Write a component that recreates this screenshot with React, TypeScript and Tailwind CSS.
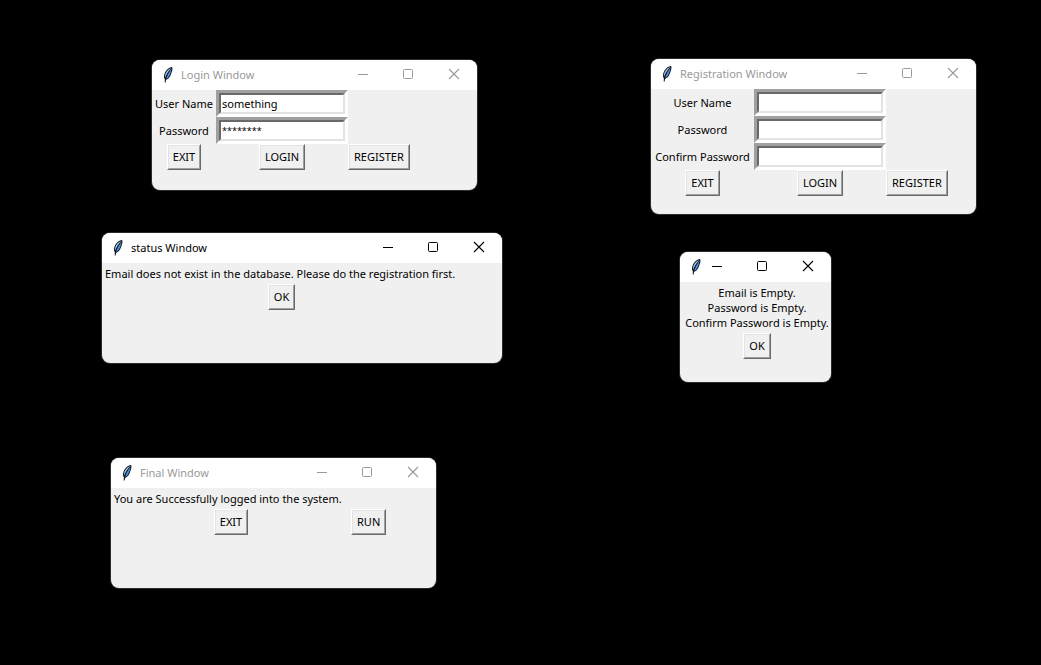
import { useId, type ReactNode } from "react";

function Feather() {
  return (
    <svg viewBox="0 0 16 16" className="size-4 shrink-0" aria-hidden="true">
      <path
        d="M12 0C9.4 0.2 6.6 2.4 5.2 5C4.1 7.2 3.7 9.4 4.2 11.3L4.9 12.2L4.7 15.5L5.6 15.5L6.1 12.9C8.2 12.2 10 10.2 10.8 7.8C11.5 6 11.9 4.6 12.3 3C12.6 1.6 12.5 0.4 12 0Z"
        fill="#11161d"
      />
      <path d="M11.3 0.9C9 1.6 7 3.5 5.9 5.8C5.1 7.6 4.8 9.3 5 10.8C6.4 7.2 8.3 4 11.3 0.9Z" fill="#a9c8ea" />
      <path d="M11.6 1.3C9.2 4.4 7.3 8 6.1 11.9C7.8 11.2 9.2 9.4 9.9 7.4C10.7 5.4 11.3 3.5 11.6 1.3Z" fill="#4b92e2" />
      <path d="M10.4 3C8.4 5.6 6.6 8.6 5.6 12" fill="none" stroke="#1c2c42" strokeWidth="0.4" />
    </svg>
  );
}

const controlClass = "flex h-7 items-center";

function WindowControls() {
  return (
    <div className="ml-auto flex min-w-0">
      <button
        type="button"
        aria-label="Minimize"
        className={`w-[45px] min-w-0 justify-end pr-[17px] ${controlClass}`}
      >
        <svg viewBox="0 0 11 11" className="size-[11px] shrink-0" fill="none" stroke="currentColor">
          <path d="M0 5.5H10" />
        </svg>
      </button>
      <button
        type="button"
        aria-label="Maximize"
        className={`w-[45px] shrink-0 justify-center ${controlClass}`}
      >
        <svg viewBox="0 0 11 11" className="size-[11px]" fill="none" stroke="currentColor">
          <rect x="0.5" y="0.5" width="9" height="9" rx="1" />
        </svg>
      </button>
      <button
        type="button"
        aria-label="Close"
        className={`w-[46px] shrink-0 justify-center ${controlClass}`}
      >
        <svg viewBox="0 0 12 12" className="size-3" fill="none" stroke="currentColor" strokeWidth="1.1">
          <path d="M1 1L11 11M11 1L1 11" />
        </svg>
      </button>
    </div>
  );
}

type WindowProps = {
  title?: string;
  active?: boolean;
  place: string;
  children: ReactNode;
};

function Window({ title, active = false, place, children }: WindowProps) {
  return (
    <section
      className={`absolute overflow-hidden rounded-lg bg-[#f0f0f0] ring-1 ring-[#2b2b2b] ${place}`}
    >
      <header
        className={`flex h-[30px] bg-white pl-2 ${active ? "text-black" : "text-[#999999]"}`}
      >
        <div className="flex shrink-0 items-center gap-[5px]">
          <Feather />
          {title && <h2>{title}</h2>}
        </div>
        <WindowControls />
      </header>
      {children}
    </section>
  );
}

function TkButton({ children }: { children: string }) {
  return (
    <button
      type="button"
      className="justify-self-center border border-t-white border-r-[#696969] border-b-[#696969] border-l-white"
    >
      <span className="block border border-t-[#e3e3e3] border-r-[#a0a0a0] border-b-[#a0a0a0] border-l-[#e3e3e3] px-1 leading-[22px]">
        {children}
      </span>
    </button>
  );
}

type FieldProps = {
  label: string;
  type?: string;
  value?: string;
  masked?: boolean;
};

function Field({ label, type = "text", value = "", masked = false }: FieldProps) {
  const id = useId();
  return (
    <>
      <label htmlFor={id} className="justify-self-center whitespace-nowrap leading-[27px]">
        {label}
      </label>
      <div className="h-[27px] border-3 border-t-[#a0a0a0] border-r-white border-b-white border-l-[#a0a0a0]">
        <input
          id={id}
          type={type}
          defaultValue={value}
          className={`block h-full w-full border-2 border-t-[#696969] border-r-[#e3e3e3] border-b-[#e3e3e3] border-l-[#696969] bg-white pl-px outline-none ${masked ? "text-[9px]" : ""}`}
        />
      </div>
    </>
  );
}

export default function App() {
  return (
    <main className="relative min-h-screen overflow-hidden bg-black font-['Noto_Sans',sans-serif] text-[11px] text-black">
      <Window title="Login Window" place="left-[152px] top-[60px] w-[325px]">
        <form className="grid min-h-[100px] grid-cols-[64px_132px_auto] content-start justify-start">
          <Field label="User Name" value="something" />
          <span />
          <Field label="Password" value="********" masked />
          <span />
          <TkButton>EXIT</TkButton>
          <TkButton>LOGIN</TkButton>
          <TkButton>REGISTER</TkButton>
        </form>
      </Window>

      <Window title="Registration Window" place="left-[651px] top-[59px] w-[325px]">
        <form className="grid min-h-[125px] grid-cols-[103px_132px_auto] content-start justify-start">
          <Field label="User Name" />
          <span />
          <Field label="Password" type="password" />
          <span />
          <Field label="Confirm Password" type="password" />
          <span />
          <TkButton>EXIT</TkButton>
          <TkButton>LOGIN</TkButton>
          <TkButton>REGISTER</TkButton>
        </form>
      </Window>

      <Window title="status Window" active place="left-[102px] top-[233px] w-[400px]">
        <div className="grid min-h-[100px] grid-cols-[359px] content-start">
          <p className="whitespace-nowrap px-[3px] leading-[21px]">
            Email does not exist in the database. Please do the registration first.
          </p>
          <TkButton>OK</TkButton>
        </div>
      </Window>

      <Window active place="left-[680px] top-[252px] w-[151px]">
        <div className="grid min-h-[100px] grid-cols-[154px] content-start">
          <p className="whitespace-nowrap py-[3px] text-center leading-[15px]">
            Email is Empty.
            <br />
            Password is Empty.
            <br />
            Confirm Password is Empty.
          </p>
          <TkButton>OK</TkButton>
        </div>
      </Window>

      <Window title="Final Window" place="left-[111px] top-[458px] w-[325px]">
        <div className="grid min-h-[100px] grid-cols-[240px_auto] content-start justify-start">
          <p className="whitespace-nowrap px-[3px] leading-[21px]">
            You are Successfully logged into the system.
          </p>
          <span />
          <TkButton>EXIT</TkButton>
          <TkButton>RUN</TkButton>
        </div>
      </Window>
    </main>
  );
}
